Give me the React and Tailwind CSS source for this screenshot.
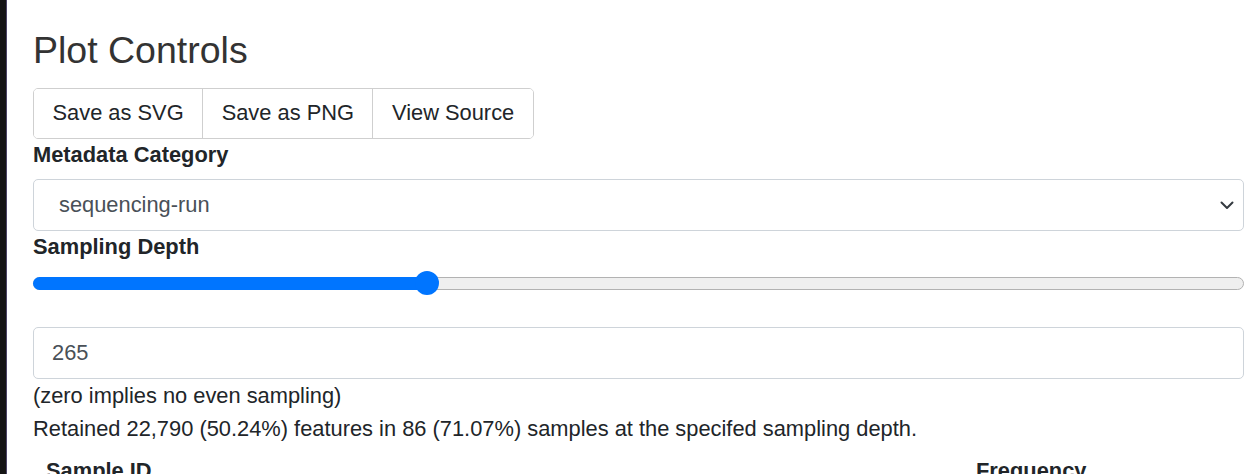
import React, { useState } from "react";

const BUTTONS = ["Save as SVG", "Save as PNG", "View Source"];

const Chevron = () => (
  <svg width="14" height="9" viewBox="0 0 14 9" fill="none">
    <path d="M1.5 1.5L7 7l5.5-5.5" stroke="#343a40" strokeWidth="2" strokeLinecap="round" strokeLinejoin="round" />
  </svg>
);

const DepthSlider = ({ value, max }) => {
  const pct = (value / max) * 100;
  return (
    <div className="relative h-[24px] flex items-center">
      <div className="w-full h-[13px] rounded-full bg-[#efefef] border border-[#b2b2b2]" />
      <div
        className="absolute left-0 h-[13px] rounded-full bg-[#0075ff]"
        style={{ width: `${pct}%` }}
      />
      <div
        className="absolute top-0 w-[24px] h-[24px] -ml-[12px] rounded-full bg-[#0075ff]"
        style={{ left: `${pct}%` }}
      />
    </div>
  );
};

export default function App() {
  const [depth] = useState(265);

  return (
    <div
      className="flex h-[474px] overflow-hidden bg-white text-[#212529] text-[21.85px] leading-[32.5px]"
      style={{ fontFamily: '"Liberation Sans", Arial, sans-serif' }}
    >
      {/* dark edge of the neighbouring pane */}
      <div className="w-[7px] shrink-0 bg-[#141414] border-r border-[#4b4466]" />

      <div className="flex-1 pl-[26px] pr-[14px]">
        <h2 className="pt-[28px] mb-[15px] text-[37.5px] leading-[45px] font-normal text-[#333]">
          Plot Controls
        </h2>

        <div className="inline-flex h-[51px] border border-[#cfcfcf] rounded-[5px] overflow-hidden">
          {BUTTONS.map((label, i) => (
            <button
              key={label}
              className={
                "px-[18.5px] bg-white text-[#212529] " +
                (i > 0 ? "border-l border-[#cfcfcf]" : "")
              }
            >
              {label}
            </button>
          ))}
        </div>

        <label className="block font-bold mb-[7.5px]">Metadata Category</label>
        <div className="flex items-center justify-between h-[52px] pl-[25px] pr-[9px] border border-[#ced4da] rounded-[5px] text-[#495057]">
          <span>sequencing-run</span>
          <Chevron />
        </div>

        <label className="block font-bold mb-[7.5px]">Sampling Depth</label>
        <DepthSlider value={depth} max={815} />

        <div className="mt-[32px] h-[52px] flex items-center pl-[18px] border border-[#ced4da] rounded-[5px] text-[#495057]">
          {depth}
        </div>

        <div className="pt-[1px]">(zero implies no even sampling)</div>
        <div>
          Retained 22,790 (50.24%) features in 86 (71.07%) samples at the specifed sampling depth.
        </div>

        <div className="grid grid-cols-[930px_1fr] pt-[10px] font-bold">
          <div className="px-[13px]">Sample ID</div>
          <div className="px-[13px]">Frequency</div>
        </div>
      </div>
    </div>
  );
}
